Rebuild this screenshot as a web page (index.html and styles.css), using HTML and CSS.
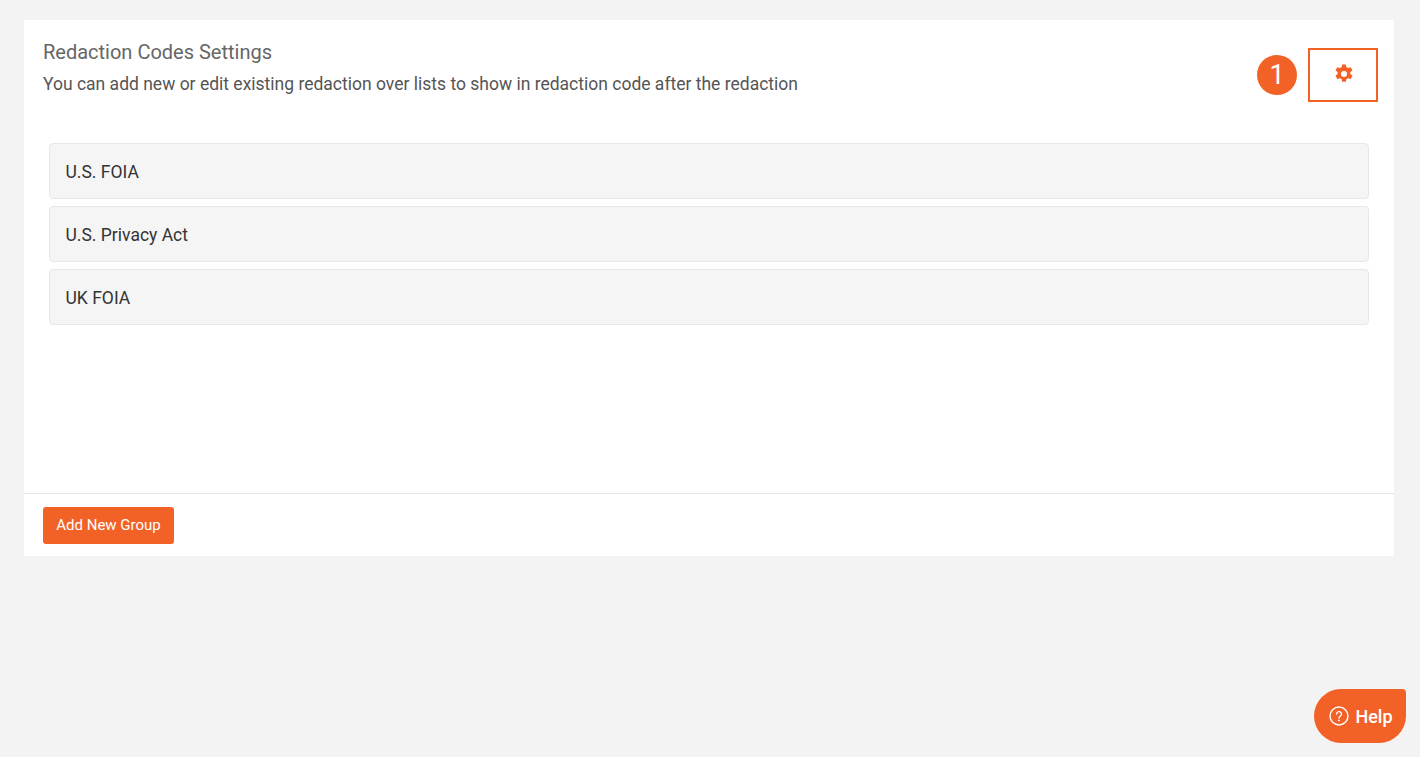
FILE: index.html
```html
<!DOCTYPE html>
<html lang="en">
<head>
  <meta charset="UTF-8" />
  <title>Redaction Codes Settings</title>
  <link rel="stylesheet" href="styles.css">
</head>
<body>
  <div class="panel">
    <div class="panel-head">
      <div class="head-text">
        <h2>Redaction Codes Settings</h2>
        <p>You can add new or edit existing redaction over lists to show in redaction code after the redaction</p>
      </div>
      <div class="head-actions">
        <span class="step">1</span>
        <button class="gear-btn" aria-label="Settings">
          <svg width="22" height="22" viewBox="0 0 24 24"><path fill-rule="evenodd" fill="#f26227" d="M10 1.500h4l.6 3.100c.6.2 1.200.5 1.700.9l3-1 2 3.500-2.400 2.100c.1.6.1 1.200 0 1.800l2.400 2.100-2 3.500-3-1c-.5.4-1.100.7-1.700.9l-.6 3.100h-4l-.6-3.100c-.6-.2-1.200-.5-1.700-.9l-3 1-2-3.500 2.400-2.100c-.1-.6-.1-1.200 0-1.800L2.700 8l2-3.500 3 1c.5-.4 1.100-.7 1.700-.9zM12 8.700a3.300 3.300 0 1 0 0 6.600 3.300 3.300 0 0 0 0-6.600z"/></svg>
        </button>
      </div>
    </div>

    <ul class="group-list">
      <li>U.S. FOIA</li>
      <li>U.S. Privacy Act</li>
      <li>UK FOIA</li>
    </ul>

    <div class="panel-foot">
      <button class="add-btn">Add New Group</button>
    </div>
  </div>

  <button class="help-btn">
    <svg width="20" height="20" viewBox="0 0 20 20" fill="none" stroke="#fff"><circle cx="10" cy="10" r="9" stroke-width="1.400"/><path d="M7.600 8a2.400 2.400 0 1 1 3.800 2c-.9.6-1.400 1-1.400 2" stroke-width="1.400" stroke-linecap="round"/><circle cx="10" cy="14.500" r=".9" fill="#fff" stroke="none"/></svg>
    Help
  </button>
</body>
</html>
```

FILE: styles.css
```css
* { box-sizing: border-box; margin: 0; padding: 0; }
body {
  background: #f3f3f3;
  font-family: Roboto, sans-serif;
  padding: 20px 26px 0 24px;
  height: 757px;
  overflow: hidden;
}

.panel {
  background: #fff;
  height: 536px;
  display: flex;
  flex-direction: column;
}

.panel-head {
  display: flex;
  justify-content: space-between;
  padding: 20px 16px 0 19px;
  height: 123px;
}

.head-text h2 {
  font-size: 20px;
  font-weight: 400;
  line-height: 24px;
  color: #666;
  margin-bottom: 8px;
}

.head-text p {
  font-size: 17.5px;
  line-height: 24px;
  color: #555;
}

.head-actions {
  display: flex;
  align-items: center;
  gap: 11px;
  height: 54px;
  margin-top: 8px;
}

.step {
  width: 40px;
  height: 40px;
  border-radius: 50%;
  background: #f26227;
  color: #fff;
  font-size: 27px;
  display: flex;
  align-items: center;
  justify-content: center;
}

.gear-btn {
  width: 70px;
  height: 54px;
  background: #fff;
  border: 2px solid #f26227;
  padding: 0 0 3px 2px;
  display: flex;
  align-items: center;
  justify-content: center;
}

.group-list {
  list-style: none;
  padding: 0 25px;
  flex: 1;
}

.group-list li {
  height: 56px;
  background: #f5f5f5;
  border: 1px solid #e8e8e8;
  border-radius: 4px;
  padding: 1px 0 0 15.5px;
  display: flex;
  align-items: center;
  font-size: 17.5px;
  color: #333;
  margin-bottom: 7px;
}

.panel-foot {
  border-top: 1px solid #e6e6e6;
  height: 63px;
  padding: 13px 19px;
}

.add-btn {
  width: 131px;
  height: 37px;
  background: #f26227;
  color: #fff;
  border: none;
  border-radius: 3px;
  padding-bottom: 2px;
  font-family: Roboto, sans-serif;
  font-size: 15px;
  font-weight: 400;
}

.help-btn {
  position: fixed;
  left: 1314px;
  top: 689px;
  width: 92px;
  height: 54px;
  padding-left: 2px;
  background: #f26227;
  color: #fff;
  border: none;
  border-radius: 27px 4px 27px 27px;
  font-family: Roboto, sans-serif;
  font-size: 18px;
  font-weight: 500;
  display: flex;
  align-items: center;
  justify-content: center;
  gap: 6px;
}
```
